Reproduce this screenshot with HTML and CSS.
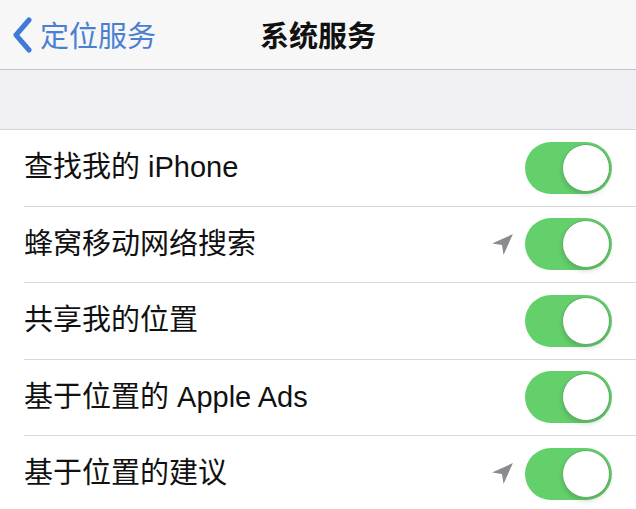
FILE: index.html
```html
<!DOCTYPE html>
<html lang="zh-CN">
<head>
<meta charset="utf-8">
<link rel="stylesheet" href="styles.css">
</head>
<body>
<header class="nav">
  <div class="back">
    <svg class="chev" width="22" height="36" viewBox="0 0 22 36"><path d="M18 3 L5 18 L18 33" fill="none" stroke="#3f7ad6" stroke-width="5" stroke-linecap="round" stroke-linejoin="round"/></svg>
    <span class="back-text">定位服务</span>
  </div>
  <div class="title">系统服务</div>
  <div></div>
</header>
<div class="gap"></div>
<ul class="list">
  <li class="row"><div class="row-inner"><span class="label">查找我的 iPhone</span><span class="ctrl"><span class="toggle"><span class="knob"></span></span></span></div></li>
  <li class="row"><div class="row-inner"><span class="label">蜂窝移动网络搜索</span><span class="ctrl"><svg class="arrow" width="25" height="25" viewBox="0 0 24 24"><path d="M22 2 L2 11 L11.5 12.5 L13 22 Z" fill="#8a8a8f"/></svg><span class="toggle"><span class="knob"></span></span></span></div></li>
  <li class="row"><div class="row-inner"><span class="label">共享我的位置</span><span class="ctrl"><span class="toggle"><span class="knob"></span></span></span></div></li>
  <li class="row"><div class="row-inner"><span class="label">基于位置的 Apple Ads</span><span class="ctrl"><span class="toggle"><span class="knob"></span></span></span></div></li>
  <li class="row"><div class="row-inner"><span class="label">基于位置的建议</span><span class="ctrl"><svg class="arrow" width="25" height="25" viewBox="0 0 24 24"><path d="M22 2 L2 11 L11.5 12.5 L13 22 Z" fill="#8a8a8f"/></svg><span class="toggle"><span class="knob"></span></span></span></div></li>
</ul>
</body>
</html>
```
FILE: styles.css
```css
* { box-sizing: border-box; }
html, body { margin: 0; padding: 0; }
body {
  background: #ffffff;
  font-family: "Noto Sans CJK SC", "Noto Sans", sans-serif;
  width: 636px;
  height: 509px;
  overflow: hidden;
}
.nav {
  height: 70px;
  background: #f7f7f8;
  border-bottom: 1px solid #c6c6ca;
  display: grid;
  grid-template-columns: 1fr auto 1fr;
  align-items: center;
}
.back {
  display: flex;
  align-items: center;
  padding-left: 11px;
  gap: 7px;
}
.chev { display: block; }
.back-text {
  font-size: 29px;
  color: #4a80d0;
  line-height: 1;
}
.title {
  font-size: 29px;
  font-weight: 600;
  color: #111111;
  line-height: 1;
}
.gap {
  height: 60px;
  background: #efeff4;
  border-bottom: 1px solid #d6d6da;
}
.list {
  list-style: none;
  margin: 0;
  padding: 0;
  background: #ffffff;
}
.row {
  padding-left: 24px;
}
.row-inner {
  height: 76.5px;
  border-bottom: 1px solid #d9d9dc;
  display: flex;
  align-items: center;
  justify-content: space-between;
  padding-right: 24px;
}
.label {
  font-family: "Liberation Sans", "Noto Sans CJK SC", sans-serif;
  font-size: 29px;
  color: #111111;
  line-height: 1;
}
.ctrl {
  display: flex;
  align-items: center;
  gap: 10px;
}
.arrow { display: block; }
.toggle {
  width: 87px;
  height: 52px;
  border-radius: 26px;
  background: #64d06c;
  display: flex;
  justify-content: flex-end;
  align-items: center;
  padding-right: 2px;
}
.knob {
  width: 48px;
  height: 48px;
  border-radius: 50%;
  background: #ffffff;
  border: 1.5px solid #5fae63;
  box-shadow: 0 3px 5px rgba(0,0,0,0.15);
}
```
